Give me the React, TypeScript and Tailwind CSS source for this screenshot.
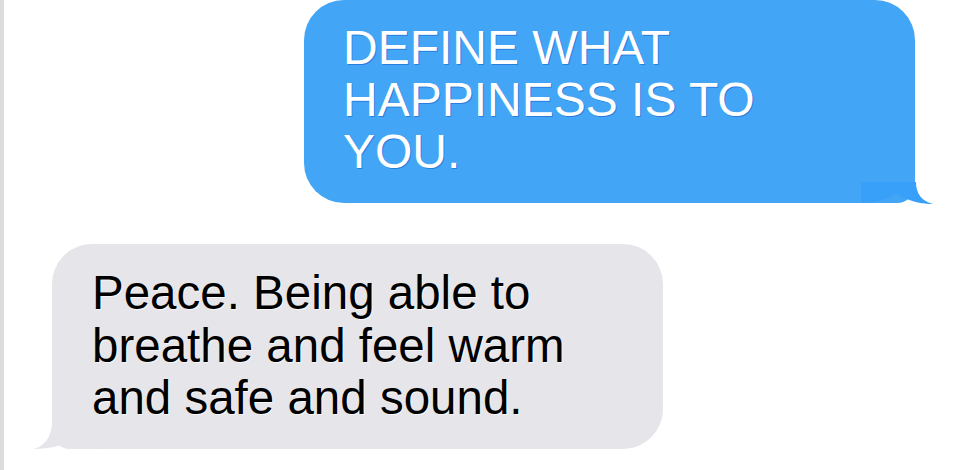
type Side = "sent" | "received";

type Message = {
  id: number;
  side: Side;
  text: string;
};

const messages: Message[] = [
  { id: 1, side: "sent", text: "DEFINE WHAT HAPPINESS IS TO YOU." },
  { id: 2, side: "received", text: "Peace. Being able to breathe and feel warm and safe and sound." },
];

function SentTail() {
  return (
    <svg
      className="absolute right-[-20px] bottom-[-2px] h-[25px] w-[76px]"
      viewBox="0 0 76 25"
      aria-hidden
    >
      <path
        d="M2 2 H57 C57 14 63 21 74 24 C64 24 50 22 37 13 C28 20 14 23 2 23 Z"
        fill="#38a0f8"
      />
    </svg>
  );
}

function ReceivedTail() {
  return (
    <svg
      className="absolute left-[-22px] bottom-[-1px] h-[28px] w-[80px]"
      viewBox="0 0 80 28"
      aria-hidden
    >
      <path
        d="M22 0 C22 15 14 25 3 27 C18 27 32 24 42 18 C52 25 62 27 75 27 V0 Z"
        fill="#e5e5ea"
      />
    </svg>
  );
}

function Bubble({ message }: { message: Message }) {
  if (message.side === "sent") {
    return (
      <div className="relative mr-[47px] self-end">
        <div className="relative z-0 w-[611px] rounded-[40px] rounded-br-[18px] bg-[#42a5f5] pt-[22px] pr-[36px] pb-[25px] pl-[39px] text-[48px] leading-[52px] text-white [text-shadow:1px_1px_0_rgba(20,90,200,0.55)]">
          {message.text}
        </div>
        <SentTail />
      </div>
    );
  }
  return (
    <div className="relative ml-[48px] self-start">
      <div className="relative w-[611px] rounded-[40px] rounded-bl-[18px] bg-[#e5e5ea] pt-[23px] pr-[36px] pb-[24px] pl-[40px] text-[47.5px] leading-[52.5px] text-black [text-shadow:1px_1px_0_rgba(255,255,255,0.7)]">
        {message.text}
      </div>
      <ReceivedTail />
    </div>
  );
}

export default function App() {
  return (
    <div className="flex h-[470px] w-full overflow-hidden bg-white font-['Liberation_Sans',Arial,sans-serif]">
      <div className="w-1 shrink-0 bg-[#dcdcdc]" />
      <div className="flex flex-1 flex-col gap-[41px]">
        {messages.map((m) => (
          <Bubble key={m.id} message={m} />
        ))}
      </div>
    </div>
  );
}
